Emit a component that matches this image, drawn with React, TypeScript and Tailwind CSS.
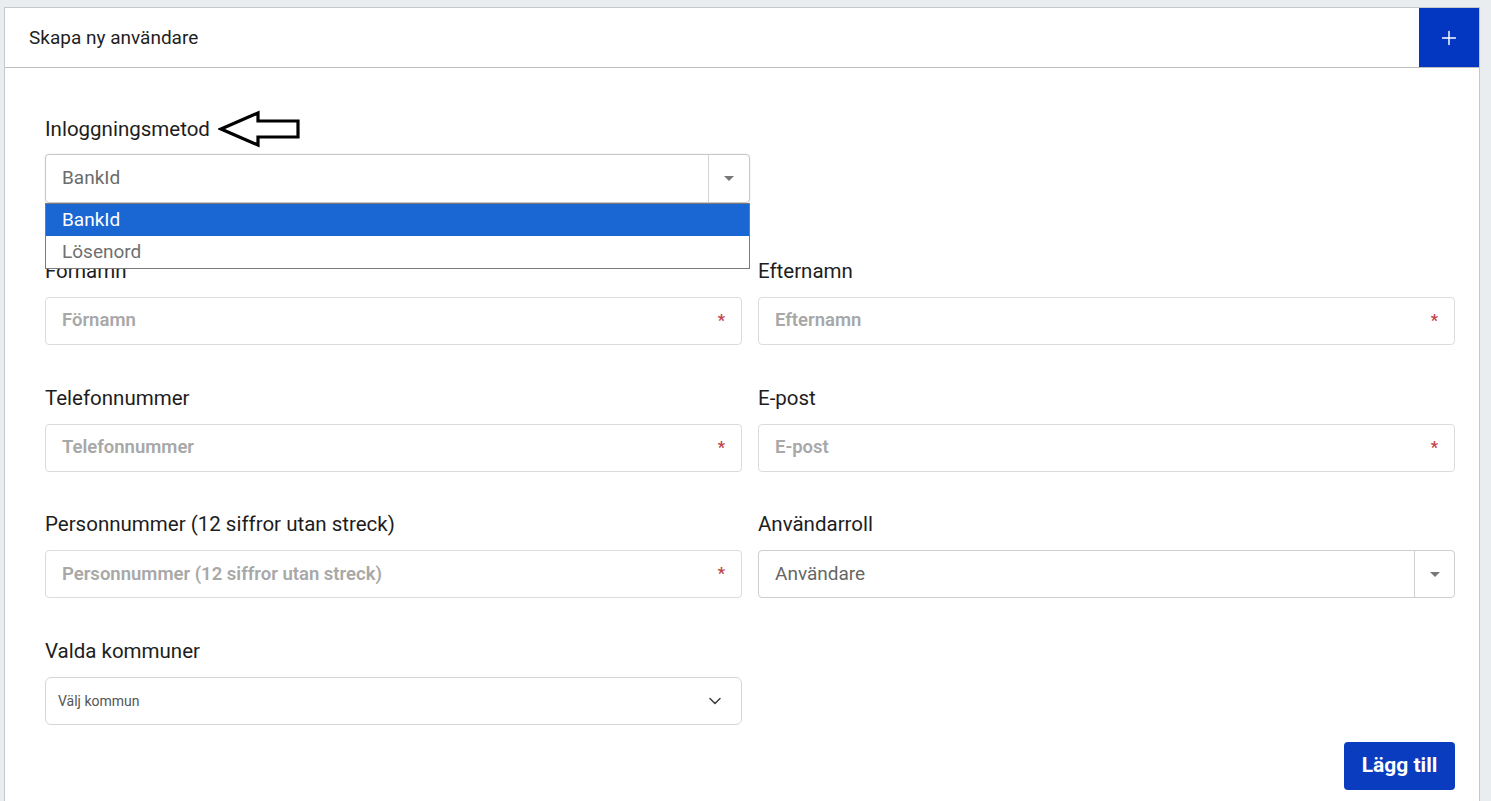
import { ChevronDown, Plus } from 'lucide-react';

const font = { fontFamily: 'Roboto, "Noto Sans", sans-serif' };

function Label({ children }: { children: React.ReactNode }) {
  return <label className="mb-3 block text-[20.5px] leading-7 text-[#1d1d1d]">{children}</label>;
}

function RequiredInput({ placeholder }: { placeholder: string }) {
  return (
    <div className="flex h-12 items-center rounded border border-[#dcdcdc] bg-white pl-4 pr-4">
      <input
        placeholder={placeholder}
        className="min-w-0 flex-1 bg-transparent text-[18.5px] font-semibold text-[#333] outline-none placeholder:text-[#a8a8a8]"
      />
      <span className="text-[16px] font-bold text-[#c2434a]">*</span>
    </div>
  );
}

function CaretSelect({ value }: { value: string }) {
  return (
    <div className="flex h-12 items-stretch rounded border border-[#cfcfcf] bg-white">
      <span className="flex flex-1 items-center pl-4 text-[19px] text-[#666]">{value}</span>
      <span className="flex w-10 items-center justify-center border-l border-[#d0d0d0]">
        <span className="h-0 w-0 border-x-[5px] border-t-[5px] border-x-transparent border-t-[#777]" />
      </span>
    </div>
  );
}

// outlined pointer arrow next to the login method label
function PointerArrow() {
  return (
    <svg width="84" height="38" viewBox="0 0 84 38" className="ml-2">
      <polygon
        points="3,19 40,3 40,11 80,11 80,27 40,27 40,35"
        fill="white"
        stroke="black"
        strokeWidth="3.2"
        strokeLinejoin="miter"
      />
    </svg>
  );
}

export default function App() {
  return (
    <div className="min-h-[801px] bg-[#e9edef] pl-1 pr-[11px] pt-[7px]" style={font}>
      <div className="min-h-[794px] border border-b-0 border-[#c6c9cc] bg-white">
        {/* Header */}
        <div className="flex h-[60px] items-center justify-between border-b border-[#bdbdbd]">
          <h2 className="pl-6 pt-0.5 text-[19px] text-[#1f1f1f]">Skapa ny användare</h2>
          <button className="flex h-full w-[60px] items-center justify-center bg-[#0437c1] text-white">
            <Plus className="h-[22px] w-[22px]" strokeWidth={1.6} />
          </button>
        </div>

        <div className="pb-3 pl-10 pr-6 pt-[42px]">
          {/* Login method */}
          <div className="flex items-center">
            <span className="text-[20.5px] leading-7 text-[#1d1d1d]">Inloggningsmetod</span>
            <PointerArrow />
          </div>
          <div className="relative mt-[6px] w-[705px]">
            <div className="flex h-[49px] items-stretch rounded border border-[#c8c8c8] bg-white shadow-[0_0_2px_rgba(0,0,0,0.12)]">
              <span className="flex flex-1 items-center pl-4 text-[19px] text-[#6b6b6b]">BankId</span>
              <span className="flex w-[41px] items-center justify-center border-l border-[#d4d4d4]">
                <span className="h-0 w-0 border-x-[5px] border-t-[5px] border-x-transparent border-t-[#777]" />
              </span>
            </div>
            {/* open option list */}
            <ul className="absolute left-0 right-0 top-[49px] z-10 border border-[#7a7a7a] bg-white text-[19px]">
              <li className="flex h-[32px] items-center bg-[#1a66d3] pl-4 text-white">BankId</li>
              <li className="flex h-[32px] items-center pl-4 text-[#6f6f6f]">Lösenord</li>
            </ul>
          </div>

          {/* Form fields */}
          <div className="mt-[54px] grid grid-cols-2 gap-x-4 gap-y-[38.7px]">
            <div>
              <Label>Förnamn</Label>
              <RequiredInput placeholder="Förnamn" />
            </div>
            <div>
              <Label>Efternamn</Label>
              <RequiredInput placeholder="Efternamn" />
            </div>
            <div>
              <Label>Telefonnummer</Label>
              <RequiredInput placeholder="Telefonnummer" />
            </div>
            <div>
              <Label>E-post</Label>
              <RequiredInput placeholder="E-post" />
            </div>
            <div>
              <Label>Personnummer (12 siffror utan streck)</Label>
              <RequiredInput placeholder="Personnummer (12 siffror utan streck)" />
            </div>
            <div>
              <Label>Användarroll</Label>
              <CaretSelect value="Användare" />
            </div>
            <div>
              <Label>Valda kommuner</Label>
              <div className="flex h-12 items-center justify-between rounded-md border border-[#d6d6d6] bg-white pl-3 pr-4">
                <span className="text-[14px] text-[#555]">Välj kommun</span>
                <ChevronDown className="h-5 w-5 text-[#3c3c3c]" strokeWidth={1.8} />
              </div>
            </div>
          </div>

          <div className="mt-[17px] flex justify-end">
            <button className="h-12 w-[111px] rounded bg-[#0a3cbf] text-[21px] font-bold text-white">Lägg till</button>
          </div>
        </div>
      </div>
    </div>
  );
}
